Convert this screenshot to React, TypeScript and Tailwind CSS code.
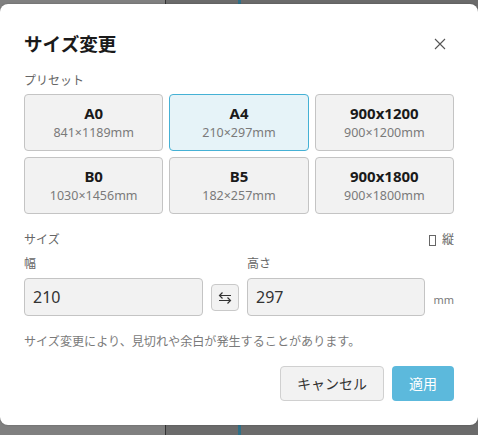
import React, { useState } from "react";

type Preset = { name: string; size: string };

const presets: Preset[] = [
  { name: "A0", size: "841×1189mm" },
  { name: "A4", size: "210×297mm" },
  { name: "900x1200", size: "900×1200mm" },
  { name: "B0", size: "1030×1456mm" },
  { name: "B5", size: "182×257mm" },
  { name: "900x1800", size: "900×1800mm" },
];

const font = "font-['Noto_Sans','Noto_Sans_CJK_JP',sans-serif]";

export default function App() {
  const [selected, setSelected] = useState("A4");

  return (
    <div className={`relative h-[435px] w-[478px] overflow-hidden bg-[#6b6b6b] ${font}`}>
      {/* canvas behind the overlay */}
      <div className="absolute inset-y-0 left-0 w-[166px] border-r border-[#333333] bg-[#808080]" />
      <div className="absolute inset-y-0 left-[238px] w-[3px] bg-[#2f6f87]" />

      <div className="relative mt-[4px] flex h-[421px] w-[478px] flex-col rounded-[8px] bg-white px-6 pt-6 shadow-[0_0_2px_rgba(0,0,0,0.25)]">
        <div className="flex h-[32px] items-center justify-between">
          <h1 className="text-[18.6px] font-bold leading-[32px] text-[#1a1a1a]">サイズ変更</h1>
          <button type="button" className="mr-[6px] text-[#555555]">
            <svg width="16" height="16" viewBox="0 0 16 16" fill="none" stroke="currentColor" strokeWidth="1.1">
              <path d="M3 3l10 10M13 3L3 13" />
            </svg>
          </button>
        </div>

        <div className="mt-[11px] text-[12px] leading-[20px] text-[#666666]">プリセット</div>

        <div className="mt-[3px] grid grid-cols-3 gap-[6px]">
          {presets.map((p) => (
            <button
              key={p.name}
              type="button"
              onClick={() => setSelected(p.name)}
              className={
                selected === p.name
                  ? "flex h-[57px] flex-col items-center justify-center rounded-[4px] border border-[#45b1d5] bg-[#e6f3f8]"
                  : "flex h-[57px] flex-col items-center justify-center rounded-[4px] border border-[#c4c4c4] bg-[#f2f2f2]"
              }
            >
              <span className="text-[15px] font-bold leading-[20px] text-[#1a1a1a]">{p.name}</span>
              <span className="text-[12.5px] leading-[19px] text-[#7a7a7a]">{p.size}</span>
            </button>
          ))}
        </div>

        <div className="mt-[16px] flex h-[20px] items-center justify-between text-[12px] text-[#666666]">
          <span>サイズ</span>
          <span className="flex items-center gap-[6px]">
            <span className="h-[11px] w-[7px] border border-[#666666]" />
            縦
          </span>
        </div>

        <div className="mt-[4px] flex text-[12px] leading-[20px] text-[#666666]">
          <span className="w-[223px]">幅</span>
          <span>高さ</span>
        </div>

        <div className="mt-[4px] flex items-start">
          <div className="flex h-[38px] w-[179px] items-center rounded-[4px] border border-[#c4c4c4] bg-[#f2f2f2] pl-[8px] text-[16px] text-[#333333]">
            210
          </div>
          <button
            type="button"
            className="ml-[8px] mt-[6px] flex h-[27px] w-[28px] items-center justify-center rounded-[4px] border border-[#c9c9c9] bg-[#f2f2f2] text-[#333333]"
          >
            <svg width="14" height="14" viewBox="0 0 14 14" fill="none" stroke="currentColor" strokeWidth="1.2">
              <path d="M13 4.5H1.5M4.5 1.5l-3 3 3 3" />
              <path d="M1 9.5h11.5M9.5 6.5l3 3-3 3" />
            </svg>
          </button>
          <div className="ml-[8px] flex h-[38px] w-[178px] items-center rounded-[4px] border border-[#c4c4c4] bg-[#f2f2f2] pl-[8px] text-[16px] text-[#333333]">
            297
          </div>
          <span className="ml-auto mt-[14px] text-[11px] leading-[16px] text-[#7a7a7a]">mm</span>
        </div>

        <p className="mt-[16px] text-[12.1px] leading-[20px] text-[#7a7a7a]">
          サイズ変更により、見切れや余白が発生することがあります。
        </p>

        <div className="mt-[14px] flex justify-end gap-[8px]">
          <button
            type="button"
            className="h-[35px] w-[104px] rounded-[4px] border border-[#d0d0d0] bg-[#f2f2f2] text-[14px] text-[#333333]"
          >
            キャンセル
          </button>
          <button type="button" className="h-[35px] w-[62px] rounded-[4px] bg-[#5cb9dc] text-[14px] text-white">
            適用
          </button>
        </div>
      </div>
    </div>
  );
}
